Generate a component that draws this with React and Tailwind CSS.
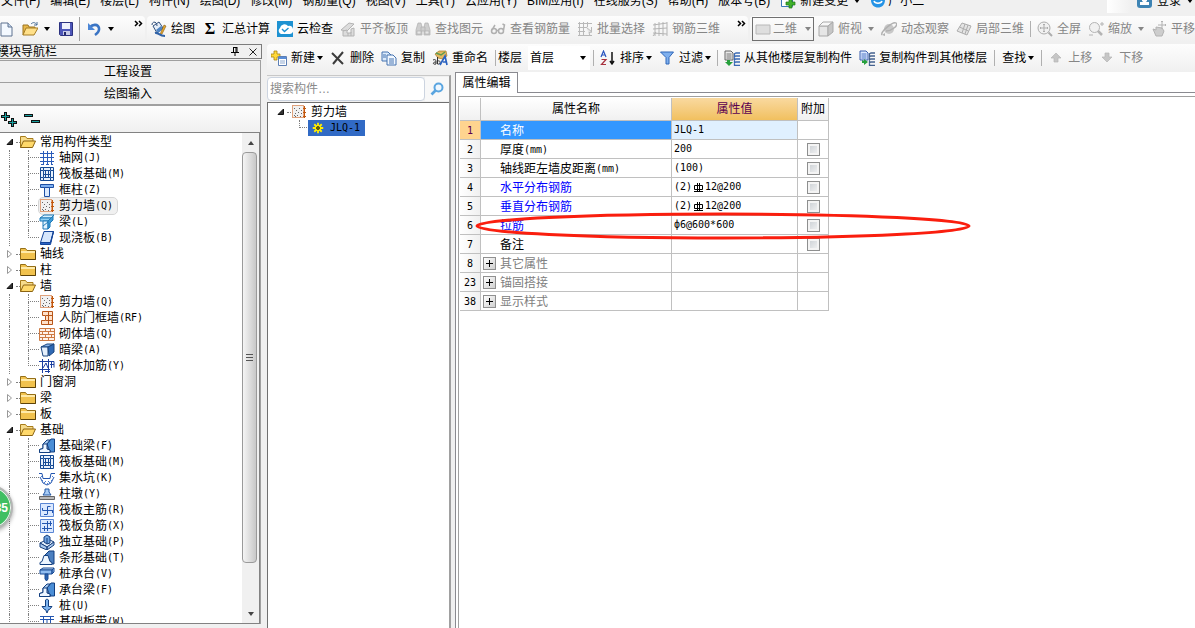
import React from 'react';
import clsx from 'clsx';

const MENUS = [
  '文件(F)', '编辑(E)', '楼层(L)', '构件(N)', '绘图(D)', '修改(M)', '钢筋量(Q)', '视图(V)',
  '工具(T)', '云应用(Y)', 'BIM应用(I)', '在线服务(S)', '帮助(H)', '版本号(B)',
];

const TREE = [
  {
    label: '常用构件类型',
    children: [
      ['axisGrid', '轴网', '(J)'],
      ['raft', '筏板基础', '(M)'],
      ['column', '框柱', '(Z)'],
      ['wall', '剪力墙', '(Q)', true],
      ['beam', '梁', '(L)'],
      ['slab', '现浇板', '(B)'],
    ],
  },
  { label: '轴线' },
  { label: '柱' },
  {
    label: '墙',
    children: [
      ['wall', '剪力墙', '(Q)'],
      ['airDefence', '人防门框墙', '(RF)'],
      ['brick', '砌体墙', '(Q)'],
      ['hiddenBeam', '暗梁', '(A)'],
      ['brickRebar', '砌体加筋', '(Y)'],
    ],
  },
  { label: '门窗洞' },
  { label: '梁' },
  { label: '板' },
  {
    label: '基础',
    children: [
      ['foundationBeam', '基础梁', '(F)'],
      ['raft', '筏板基础', '(M)'],
      ['sump', '集水坑', '(K)'],
      ['pier', '柱墩', '(Y)'],
      ['raftMain', '筏板主筋', '(R)'],
      ['raftNegative', '筏板负筋', '(X)'],
      ['isolated', '独立基础', '(P)'],
      ['strip', '条形基础', '(T)'],
      ['pileCap', '桩承台', '(V)'],
      ['foundationBeam', '承台梁', '(F)'],
      ['pile', '桩', '(U)'],
      ['band', '基础板带', '(W)'],
    ],
  },
];

const ROWS = [
  { no: 1, name: '名称', value: 'JLQ-1', selected: true },
  { no: 2, name: '厚度', unit: '(mm)', value: '200', check: true },
  { no: 3, name: '轴线距左墙皮距离', unit: '(mm)', value: '(100)', check: true },
  { no: 4, name: '水平分布钢筋', value: '(2)', rebar: '12@200', check: true, link: true },
  { no: 5, name: '垂直分布钢筋', value: '(2)', rebar: '12@200', check: true, link: true },
  { no: 6, name: '拉筋', value: 'ф6@600*600', check: true, link: true },
  { no: 7, name: '备注', value: '', check: true },
  { no: 8, name: '其它属性', group: true },
  { no: 23, name: '锚固搭接', group: true },
  { no: 38, name: '显示样式', group: true },
];

const ICONS = {
  // file toolbar
  file: (
    <>
      <path d="M3 2h7l4 4v9H3z" fill="#f4f9ff" stroke="#5f7390" />
      <path d="M10 2v4h4" fill="#c7d8ee" stroke="#5f7390" />
    </>
  ),
  open: (
    <>
      <path d="M1 14V4h5l1 2h6v3" fill="#e8b84a" stroke="#9c7420" />
      <path d="M1 14l3-7h12l-4 7z" fill="#ffe08a" stroke="#a57c24" />
      <path d="M9 3c2-2 4-2 6 1m0-3v3h-3" fill="none" stroke="#4a6e96" />
    </>
  ),
  save: (
    <>
      <path d="M1.500 1.500h13v13h-12l-1-1z" fill="#4d56b8" stroke="#2c3280" />
      <path d="M4 2h8v6H4z" fill="#eef0fb" />
      <path d="M5 10h7v4H5z" fill="#c8cce8" />
      <path d="M6 11h2v3H6z" fill="#23286a" />
    </>
  ),
  undo: (
    <>
      <path d="M4 6c3-3 8-3 9 1 .5 3-1 5-4 7" fill="none" stroke="#3a74c4" strokeWidth="2.600" />
      <path d="M2 2v7h7z" fill="#4b86d6" />
    </>
  ),
  draw: (
    <>
      <path d="M2 5l6-4 4 6-6 5z" fill="#e6eef8" stroke="#2f4f7c" />
      <path d="M1 4c0-4 5-4 5 1" fill="none" stroke="#2f4f7c" />
      <path d="M5 9l5-4 2 3-5 4z" fill="#4d84c4" />
      <path d="M15 5l-4 8-2 1 1-3 3-7z" fill="#e9a92c" stroke="#7c5512" strokeWidth=".6" />
      <path d="M4 12c3-1 4 3 10 3" fill="none" stroke="#2f62a8" strokeWidth="2" />
    </>
  ),
  cloud: (
    <>
      <path d="M0 0h16v16H0z" fill="#1e92d2" />
      <path d="M4 13a3.500 3.500 0 0 1-1-6 4.500 4.500 0 0 1 8-2 4 4 0 0 1 2 8z" fill="#fff" />
      <path d="M5 8l2.500 2.500L11.500 7" fill="none" stroke="#1e92d2" strokeWidth="1.400" />
    </>
  ),
  level: (
    <g fill="#dcdcdc" stroke="#b4b4b4">
      <path d="M1 9l8-7 5 1-7 7z" />
      <path d="M3 10v5h11V7l-3 1v4H7V9z" />
      <path d="M8 15v-3m3 3v-4" />
    </g>
  ),
  find: (
    <g fill="#cecece" stroke="#b0b0b0" strokeWidth=".7">
      <path d="M3 2h3l1 4v8H1V9zM10 2h3l2 7v5H9V6z" />
      <path d="M6 6h4v4H6z" />
      <path d="M2 10h4v3H2zM10 10h4v3h-4z" fill="#e6e6e6" />
    </g>
  ),
  glasses: (
    <g fill="none" stroke="#b0b0b0" strokeWidth="1.500">
      <circle cx="4" cy="10" r="2.500" />
      <circle cx="11" cy="10" r="2.500" />
      <path d="M6.500 9.500h2M2 9l3-5M13.500 9l1-5-2-1" />
    </g>
  ),
  batch: (
    <g fill="none" stroke="#b9b9b9">
      <path d="M1 2.500h14M1 6.500h8M1 10.500h7M1 14.500h14M2.500 1v14M6.500 1v14M10.500 1v5M14.500 6v4" />
      <path d="M9 6l6 5-3 .5 1 3.500" fill="#e5e5e5" />
    </g>
  ),
  rebar3d: (
    <g fill="none" stroke="#b4b4b4">
      <path d="M1 4l14-2M1 8l14-1M1 12l14 1M3 2v13M7 1v14M11 1v14M15 1v14M1 15l3-4" />
    </g>
  ),
  card: <path d="M1 4h14v9H1z" fill="#dedede" stroke="#b8b8b8" />,
  cube: (
    <g stroke="#a9a9a9">
      <path d="M1 5h9v10H1z" fill="#e6e6e6" />
      <path d="M1 5l4-4h10l-5 4z" fill="#f7f7f7" />
      <path d="M10 5l5-4v10l-5 4z" fill="#c6c6c6" />
    </g>
  ),
  orbit: (
    <>
      <circle cx="8" cy="8" r="5" fill="#c8c8c8" />
      <path d="M1 14C-1 11 12 0 15 2s-4 8-10 8" fill="none" stroke="#b0b0b0" strokeWidth="1.500" />
      <path d="M4 12l-3 2 3 1z" fill="#b2b2b2" />
    </>
  ),
  part3d: (
    <g fill="#e4e4e4" stroke="#adadad">
      <path d="M1 10l5-8 9 3-4 9z" />
      <path d="M3.500 6l9 4M9 3l-3 9M12 4l-3 9" fill="none" />
    </g>
  ),
  fullscreen: (
    <g fill="none" stroke="#adadad">
      <circle cx="7" cy="7" r="6" fill="#f1f1f1" />
      <path d="M7 3v8M3 7h8M6 4l1-1 1 1M6 10l1 1 1-1M4 6L3 7l1 1M10 6l1 1-1 1" />
      <path d="M11.500 11.500L15 15" strokeWidth="2" />
    </g>
  ),
  zoom: (
    <g fill="none" stroke="#b4b4b4">
      <circle cx="6.500" cy="6.500" r="5" fill="#f1f1f1" />
      <path d="M10 10l4 4" strokeWidth="2.500" />
      <path d="M12 3h4M14 1v4M1 14h4" />
    </g>
  ),
  pan: (
    <g fill="#cdcdcd" stroke="#b2b2b2">
      <path d="M2 8l3 1V6l6 1 2 3-2 5H5z" />
      <path d="M11 0v8M7 4h8M10 1l1-1 1 1M14 3l1 1-1 1" fill="none" />
    </g>
  ),
  // component toolbar
  create: (
    <>
      <path d="M3 1h3v3h3v3H6v3H3V7H0V4h3z" fill="#ffd93b" stroke="#a98310" strokeWidth=".8" />
      <path d="M7.500 6.500h8v9h-8z" fill="#fff" stroke="#5d7fb4" />
      <path d="M8 7h7v2H8z" fill="#5a8ed8" />
      <path d="M9 11h5M9 13h5" stroke="#8ea9cf" />
    </>
  ),
  remove: <path d="M2 3l11 11M13 2L3 14" fill="none" stroke="#3c3c3c" strokeWidth="2" />,
  copy: (
    <g stroke="#4472b0">
      <path d="M1 2h6l3 3v6H1z" fill="#dcebfb" />
      <path d="M6 5h6l3 3v7H6z" fill="#f2f8ff" />
      <path d="M8 9h5M8 11h5M8 13h5M2 5h3M2 7h3" />
    </g>
  ),
  rename: (
    <>
      <path d="M3 4l4-3h7l1 5-4 3-5-1z" fill="#e5b862" stroke="#a37a2a" strokeWidth=".7" />
      <path d="M4 3l5 2 4-3" fill="none" stroke="#5e9b4e" strokeWidth="1.500" />
      <path d="M1 10c2-1 3 0 3 1v3c-3 1-4-2 0-2M5.500 7v7c3 1 4-4 0-3" fill="none" stroke="#333" />
      <path d="M8 15l5-9 2 9m-4-3h4" fill="none" stroke="#2a62c0" strokeWidth="1.700" />
    </>
  ),
  sort: (
    <>
      <path d="M1 7l2.500-6L6 7M2 5h3" fill="none" stroke="#2a56c0" strokeWidth="1.200" />
      <path d="M1.500 9.500H6l-4.500 5H6" fill="none" stroke="#a8323e" strokeWidth="1.200" />
      <path d="M12 2v12m-2-3l2 3 2-3" fill="none" stroke="#111" strokeWidth="1.500" />
    </>
  ),
  filter: <path d="M1.500 2h13L10 7.500V14H7V7.500z" fill="#7fb0ee" stroke="#2f66b8" />,
  copyFrom: (
    <>
      <path d="M1 1h6l2 2v7H1z" fill="#e9e9e9" stroke="#666" />
      <path d="M2.500 4h5M2.500 6h5M2.500 8h5" stroke="#777" />
      <path d="M3 10h3v2h3l-4 4-4-4h2z" fill="#27a03c" />
      <path d="M10 4l2-1h4M10 7l2-1h4M10 10l2-1h4M10 13l2-1h4M10.500 4v12M11 15.500h5" fill="none" stroke="#3a69b4" strokeWidth="1.300" />
    </>
  ),
  copyTo: (
    <>
      <path d="M1 1h6l2 2v7H1z" fill="#dbe8ff" stroke="#3b5fae" />
      <path d="M2.500 4h5M2.500 6h5M2.500 8h5" stroke="#4d74c4" />
      <path d="M3 10v3h2v2l4-3-4-3v2z" fill="#27a03c" />
      <path d="M10 4l2-1h4M10 7l2-1h4M10 10l2-1h4M10 13l2-1h4M10.500 4v12M11 15.500h5" fill="none" stroke="#44618e" strokeWidth="1.300" />
    </>
  ),
  up: <path d="M8 3l5 5h-3v4H6V8H3z" fill="#c6c6c6" stroke="#b4b4b4" strokeWidth=".7" />,
  down: <path d="M8 12L3 7h3V3h4v4h3z" fill="#c6c6c6" stroke="#b4b4b4" strokeWidth=".7" />,
  // menu bar
  change: (
    <>
      <path d="M1.500 0v13.500h11V0" fill="#fff" stroke="#3a78b8" />
      <path d="M9 6h3v3h3v3h-3v3H9v-3H6V9h3z" fill="#3fb02a" stroke="#1f7a14" strokeWidth=".7" />
    </>
  ),
  robot: (
    <>
      <path d="M1 4h14v3c0 10-14 10-14 0z" fill="#2593e6" />
      <path d="M4 8c1 3 7 3 8 0" fill="none" stroke="#fff" strokeWidth="1.500" />
      <path d="M4 5h2M10 5h2" stroke="#fff" strokeWidth="2" />
    </>
  ),
  login: (
    <>
      <rect width="15" height="15" rx="3" fill="#3e84b4" />
      <path d="M3 9h9v3H3z" fill="#fff" />
      <path d="M5 4h5v4l-2.500 2L5 8z" fill="#fff" />
    </>
  ),
  // tree
  folder: (
    <>
      <path d="M.5 13.500v-11h5l1.500 2h8.500v9z" fill="#f1c24e" stroke="#967018" />
      <path d="M1 6h14" stroke="#ffeaa8" strokeWidth="2" />
      <path d="M15.500 5v8.500H1" fill="none" stroke="#5d430a" />
    </>
  ),
  folderOpen: (
    <>
      <path d="M.5 13.500v-11h5l1.500 2h6v3" fill="#f7dc8c" stroke="#a87d1c" />
      <path d="M.5 13.500l3-6.500h12l-3 6.500z" fill="#ffd96b" stroke="#8b6312" />
    </>
  ),
  axisGrid: (
    <path d="M4.500 1v14M8.500 1v14M12.500 1v14M1 3.500h14M1 7.500h14M1 11.500h14M2 14.500h2M7 14.500h3M12 14.500h2" fill="none" stroke="#2a5cba" />
  ),
  raft: (
    <g fill="none" stroke="#164a94">
      <path d="M1.500 1.500h13v13h-13z" fill="#e8f1fc" />
      <path d="M4.500 4.500h7v7h-7zM4.500 1v3M11.500 1v3M4.500 12v3M11.500 12v3M1 4.500h3M1 11.500h3M12 4.500h3M12 11.500h3M6.500 5v6M9.500 5v6M5 8.500h6" />
    </g>
  ),
  column: (
    <g stroke="#1d4fa4">
      <path d="M1.500 2.500h13v3h-13z" fill="#7fb0f0" />
      <path d="M5.500 5.500h5v9h-5z" fill="#dceafd" />
    </g>
  ),
  wall: (
    <g shapeRendering="crispEdges">
      <path d="M1.500 1.500h11v12h-11z" fill="#f1f1f1" stroke="#e0a27c" />
      <path d="M3 11.500h1M4 9.500h1M6 11.500h1M7 8.500h1M9 12.500h1M5 6.500h1M3 4.500h1M8 4.500h1M10 9.500h1M4 12.500h1M10 6.500h1" stroke="#666" />
      <path d="M13.500 2v12M12 4.500h3M12 8.500h3M12 12.500h3" stroke="#c2570c" />
    </g>
  ),
  beam: (
    <g stroke="#1f7ab8">
      <path d="M1 4l4-3h10l-3 3z" fill="#d6f0ff" />
      <path d="M1 4h11v3H1z" fill="#8fd0f4" />
      <path d="M4 7h5v8H4z" fill="#e2f4ff" />
      <path d="M9 7l5-5v4l-3 3v4l-2 2zM4 12l5-4" fill="#3c9ad6" />
    </g>
  ),
  slab: (
    <g stroke="#15459a">
      <path d="M5 1.500h9.500l-3 11H1.500z" fill="#d6e6fc" />
      <path d="M1.500 12.500v2h10l3-13-3 11z" fill="#2c64c4" />
    </g>
  ),
  airDefence: (
    <>
      <path d="M3.500 1.500h10v13h-11v-4h4v-5h-3z" fill="#ffe2cb" stroke="#b8561a" />
      <path d="M9.500 2v12M7 5.500h6M7 10.500h6" stroke="#b8561a" />
    </>
  ),
  brick: (
    <g stroke="#cd7a43">
      <path d="M.5 2.500h15v12H.5z" fill="#fff3ea" />
      <path d="M1 5.500h14M1 8.500h14M1 11.500h14M6.500 3v3M11.500 3v3M3.500 6v3M9.500 6v3M6.500 9v3M12.500 9v3M3.500 12v2M9.500 12v2" />
    </g>
  ),
  hiddenBeam: (
    <g stroke="#1b4680">
      <path d="M2 5l6-3h7l-6 3z" fill="#8bb6ea" />
      <path d="M2 5h7v9H4z" fill="#e5f0fd" />
      <path d="M9 5l6-3v8l-5 4z" fill="#2f69b4" />
    </g>
  ),
  brickRebar: (
    <g fill="none" stroke="#1c3fa0">
      <path d="M0 3.500h15v6M0 11.500h11M3.500 1v14M9.500 1v14" />
      <path d="M4 10l3-5 2 5M12.500 4v6M11 6.500h4M6 13.500h5" />
    </g>
  ),
  foundationBeam: (
    <g stroke="#123f80">
      <path d="M8 6l4-5h3.500v13H11z" fill="#4b8ed6" />
      <path d="M.5 14.500v-3l3.500-1V6l4-4h3L8 6v5l3 1v2.500z" fill="#a9cbf0" />
      <path d="M.5 14.500v-3l3.500-1V6h4v5l3 1v2.500z" fill="#eef6ff" />
    </g>
  ),
  sump: (
    <>
      <path d="M0 3.500h3l1 5h7l1-5h4M1 7l3 6 4 2 4-2 3-6" fill="none" stroke="#2356b0" />
      <path d="M3 10.500h1M6 11.500h1M9 11.500h1M12 10.500h1M5 12.500h1M8 13.500h1M10 12.500h1M2 6.500h1M13 6.500h1" stroke="#4a7ed0" />
    </>
  ),
  pier: (
    <>
      <path d="M4 9l2-3V3h4v3l2 3z" fill="#a9cdf6" stroke="#2156a4" />
      <path d="M.5 10.500h15v3H.5z" fill="#b9b9b9" stroke="#666" />
    </>
  ),
  raftMain: (
    <g fill="none" stroke="#2356b0">
      <path d="M1.500 1.500h13v13h-13z" fill="#dbe9ff" stroke="#5a86d4" />
      <path d="M3.500 6v2.500h10M8.500 12.500v-8h3M13.500 8v3M5 12.500h3" />
    </g>
  ),
  raftNegative: (
    <g fill="none" stroke="#2356b0">
      <path d="M1.500 1.500h13v13h-13z" fill="#dbe9ff" stroke="#5a86d4" />
      <path d="M3 5.500h10M3 10.500h10M5.500 8v5M11.500 3v5M8.500 3v10" />
    </g>
  ),
  isolated: (
    <g stroke="#173f7c">
      <path d="M1 9l8-4 6 3-7 5z" fill="#e4effc" />
      <path d="M1 9l7 4v3l-7-3zM8 13l7-5v3l-7 5z" fill="#a8c8ee" />
      <path d="M5 3l3-2 3 2v6l-3 1-3-2z" fill="#6fa4e2" />
      <path d="M8 4v6" />
    </g>
  ),
  strip: (
    <g stroke="#123f80">
      <path d="M6 5l4-4h5v13h-3z" fill="#4b7fc0" />
      <path d="M1 14.500v-2l2-1 2-6h4l2 6 2 1v2z" fill="#eef6ff" />
    </g>
  ),
  pileCap: (
    <g stroke="#184a94">
      <path d="M1 4l3-2h11l-2 2z" fill="#cfe3fb" />
      <path d="M1 4h12v4H1zM13 4l2-2v4l-2 2z" fill="#8fbcf0" />
      <path d="M6 8h3v5l-1.500 2L6 13z" fill="#2b63b0" />
    </g>
  ),
  pile: (
    <g stroke="#123f80">
      <path d="M6.500 2c1-1 2-1 3 0v6.500h3.500l-2.500 3h-1l-1.500 3.500-1.500-3.500h-1L3 8.500h3.500z" fill="#7fb4ee" />
    </g>
  ),
  band: <path d="M1 2.500h14M1 5.500h14M4.500 3v12M11.500 3v12M8 6v9" fill="none" stroke="#2356b0" />,
  sun: (
    <>
      <path d="M8 1v14M1 8h14M3 3l10 10M13 3L3 13" stroke="#ffee00" strokeWidth="2.400" />
      <circle cx="8" cy="8" r="4" fill="#ffee00" />
      <circle cx="8" cy="8" r="2" fill="#7c7400" stroke="#222" />
    </>
  ),
};

const Icon = ({ name, className }) => (
  <svg viewBox="0 0 16 16" className={clsx('w-4 h-4 shrink-0', className)} aria-hidden="true">
    {ICONS[name]}
  </svg>
);

const Caret = ({ className }) => (
  <svg viewBox="0 0 6 4" className={clsx('w-1.5 h-1 shrink-0', className)} aria-hidden="true">
    <path d="M0 0h6L3 4z" fill="currentColor" />
  </svg>
);

const More = () => (
  <button aria-label="更多" className="self-start mt-1">
    <svg viewBox="0 0 9 7" className="w-[9px] h-[7px]" fill="none" stroke="#000" strokeWidth="1.500">
      <path d="M1 1l2.500 2.500L1 6M5 1l2.500 2.500L5 6" />
    </svg>
  </button>
);

const Sep = ({ className }) => <span className={clsx('w-px h-4 bg-[#b0b0b0] shrink-0', className)} />;

const ToolButton = ({ icon, label, caret, disabled }) => (
  <button
    disabled={disabled}
    className={clsx('flex items-center shrink-0 whitespace-nowrap', disabled ? 'text-[#868686]' : 'text-black')}
  >
    {icon === 'sigma' ? (
      <span className="w-4 mr-1 font-['Liberation_Serif'] text-[16px] leading-4 font-bold text-center">Σ</span>
    ) : (
      icon && <Icon name={icon} className="mr-1" />
    )}
    {label}
    {caret === 'wide' && <Caret className="ml-1.5" />}
    {caret === 'tight' && <Caret className="ml-0.5" />}
  </button>
);

// half-width latin text beside the 12px chinese glyphs
const Mono = ({ children }) => (
  <span className="font-['DejaVu_Sans_Mono','Noto_Sans_CJK_SC',monospace] text-[10px]">{children}</span>
);

const Expander = ({ open }) => (
  <svg viewBox="0 0 8 8" className="w-2 h-2 shrink-0" aria-hidden="true">
    {open ? (
      <path d="M6.500 1v5.500H1z" fill="#333" stroke="#111" />
    ) : (
      <path d="M1.500 .5L5.500 4l-4 3.500z" fill="#fff" stroke="#999" />
    )}
  </svg>
);

const MenuBar = () => (
  <nav className="flex items-start h-[23px] -mt-[7px] leading-4 whitespace-nowrap overflow-hidden">
    <div className="flex gap-2.5 pl-px">
      {MENUS.map((m) => (
        <button key={m}>{m}</button>
      ))}
    </div>
    <button className="flex items-center ml-2.5">
      <Icon name="change" className="mr-1" />
      新建变更
      <Caret className="ml-1.5" />
    </button>
    <button className="flex items-center ml-2.5">
      <Icon name="robot" className="mr-0.5" />
      广小二
    </button>
    <div className="ml-auto w-6 h-5 bg-gradient-to-r from-white to-[#f0f0f0]" />
    <button className="flex items-center ml-1.5">
      <Icon name="login" className="mr-1" />
      登录
      <Caret className="ml-1.5 mr-0.5" />
    </button>
  </nav>
);

const bar = 'flex items-center bg-gradient-to-b from-[#fdfdfd] to-[#f0f0f0]';

const MainToolbar = () => (
  <div className="flex gap-0.5 h-[27px] overflow-hidden">
    <div className={clsx(bar, 'w-[145px] shrink-0 rounded-r')}>
      <button aria-label="新建" className="-ml-0.5"><Icon name="file" /></button>
      <button aria-label="打开" className="flex items-center ml-2">
        <Icon name="open" />
        <Caret className="ml-1.5" />
      </button>
      <button aria-label="保存" className="ml-2"><Icon name="save" /></button>
      <span className="w-px h-6 bg-[#a0a0a0] ml-[5px]" />
      <button aria-label="撤销" className="flex items-center ml-1.5">
        <Icon name="undo" />
        <Caret className="ml-1.5" />
      </button>
      <span className="flex self-stretch ml-5"><More /></span>
    </div>
    <div className={clsx(bar, 'w-[601px] shrink-0 gap-[7px] pl-1 rounded')}>
      <ToolButton icon="draw" label="绘图" />
      <ToolButton icon="sigma" label="汇总计算" />
      <ToolButton icon="cloud" label="云检查" />
      <ToolButton icon="level" label="平齐板顶" disabled />
      <ToolButton icon="find" label="查找图元" disabled />
      <ToolButton icon="glasses" label="查看钢筋量" disabled />
      <ToolButton icon="batch" label="批量选择" disabled />
      <ToolButton icon="rebar3d" label="钢筋三维" disabled />
      <span className="flex self-stretch ml-2.5"><More /></span>
    </div>
    <div className={clsx(bar, 'grow gap-[7px] pl-0.5 rounded-l')}>
      <label className="flex items-center h-6 w-[62px] shrink-0 mr-[-3px] px-0.5 border border-[#707070] text-[#868686]">
        <Icon name="card" />
        <select aria-label="视图" className="appearance-none grow min-w-0 pl-0.5 text-[12px]">
          <option>二维</option>
        </select>
        <Caret />
      </label>
      <ToolButton icon="cube" label="俯视" caret="wide" disabled />
      <ToolButton icon="orbit" label="动态观察" disabled />
      <ToolButton icon="part3d" label="局部三维" disabled />
      <Sep className="-mx-px" />
      <ToolButton icon="fullscreen" label="全屏" disabled />
      <ToolButton icon="zoom" label="缩放" caret="wide" disabled />
      <ToolButton icon="pan" label="平移" disabled />
    </div>
  </div>
);

const ComponentToolbar = () => (
  <div className={clsx(bar, 'h-[28px] gap-[7px] pl-1 rounded-l overflow-hidden')}>
    <ToolButton icon="create" label="新建" caret="tight" />
    <ToolButton icon="remove" label="删除" />
    <ToolButton icon="copy" label="复制" />
    <ToolButton icon="rename" label="重命名" />
    <div className="flex items-center gap-0.5">
      <Sep />
      <label htmlFor="floor" className="shrink-0 whitespace-nowrap">楼层</label>
      <div className="flex items-center w-[62px] h-6 ml-1 bg-white">
        <select id="floor" className="appearance-none grow min-w-0 pl-0.5 text-[12px]">
          <option>首层</option>
        </select>
        <Caret className="mr-1" />
      </div>
    </div>
    <Sep className="-ml-1 -mr-px" />
    <ToolButton icon="sort" label="排序" caret="tight" />
    <ToolButton icon="filter" label="过滤" caret="tight" />
    <Sep className="-mx-px" />
    <ToolButton icon="copyFrom" label="从其他楼层复制构件" />
    <ToolButton icon="copyTo" label="复制构件到其他楼层" />
    <Sep />
    <ToolButton label="查找" caret="tight" />
    <Sep className="-mr-px" />
    <ToolButton icon="up" label="上移" disabled />
    <ToolButton icon="down" label="下移" disabled />
  </div>
);

const TreeChild = ({ item: [icon, label, key, active], last }) => (
  <li className="flex h-4 items-center whitespace-nowrap">
    <span className="w-[19px] ml-[9px] h-4 border-l border-dotted border-[#808080]" />
    <span className="w-[11px] h-4">
      <span className="block h-2 border-l border-b border-dotted border-[#808080]" />
      {!last && <span className="block h-2 border-l border-dotted border-[#808080]" />}
    </span>
    <button
      className={clsx(
        'flex items-center h-4 pr-1',
        active && 'rounded-sm bg-[#f0f0f0] outline outline-1 outline-[#d5d5d5]'
      )}
    >
      <Icon name={icon} className="mr-1" />
      {label}
      <Mono>{key}</Mono>
    </button>
  </li>
);

const ModuleTree = () => (
  <ul className="grow min-w-0 pt-px overflow-hidden">
    {TREE.map(({ label, children }) => (
      <li key={label}>
        <button className="flex h-4 items-center pl-1.5 whitespace-nowrap">
          <Expander open={!!children} />
          <span className="w-1 ml-0.5 h-px border-b border-dotted border-[#808080]" />
          <Icon name={children ? 'folderOpen' : 'folder'} className="mr-1" />
          {label}
        </button>
        {children && (
          <ul>
            {children.map((c, i) => (
              <TreeChild key={c[1]} item={c} last={i === children.length - 1} />
            ))}
          </ul>
        )}
      </li>
    ))}
  </ul>
);

const ScrollBar = () => (
  <div className="flex flex-col w-[17px] shrink-0 bg-[#f0f0f0]">
    <button aria-label="向上" className="flex h-[19px] items-center justify-center">
      <Caret className="rotate-180 text-[#444]" />
    </button>
    <div className="flex flex-col gap-0.5 justify-center items-center h-[411px] mr-0.5 border border-[#9a9a9a] rounded-sm bg-gradient-to-r from-[#f5f5f5] to-[#c8c8c8]">
      <span className="w-[7px] h-px bg-[#555]" />
      <span className="w-[7px] h-px bg-[#555]" />
      <span className="w-[7px] h-px bg-[#555]" />
    </div>
    <button aria-label="向下" className="flex h-[19px] mt-auto items-center justify-center">
      <Caret className="text-[#444]" />
    </button>
  </div>
);

const Navigator = () => (
  <aside className="flex flex-col w-[262px] shrink-0 pb-1">
    <header className="flex items-center h-[15px] border border-l-0 border-[#7c7c7c] overflow-hidden whitespace-nowrap">
      <h2 className="-ml-[3px] leading-3">模块导航栏</h2>
      <button aria-label="固定" className="ml-auto mr-2.5">
        <svg viewBox="0 0 8 9" className="w-2 h-[9px]" fill="none" stroke="#000">
          <path d="M2 .5h4M2.500 0v5M5 0v5M6 0v5M0 5.500h8M4 6v3" />
        </svg>
      </button>
      <button aria-label="关闭" className="mr-1">
        <svg viewBox="0 0 8 8" className="w-2 h-2" fill="none" stroke="#222">
          <path d="M.5.5l7 7M7.500.5l-7 7" />
        </svg>
      </button>
    </header>
    <div className="flex flex-col grow min-h-0 mt-px mr-px border-t border-r border-[#a0a0a0]">
      <button className="h-[22px] pr-1 shrink-0 border-b border-[#a0a0a0]">工程设置</button>
      <button className="h-[23px] pr-1 shrink-0 border-b-2 border-[#a0a0a0]">绘图输入</button>
      <div className={clsx(bar, 'h-[26px] shrink-0 pl-px gap-[7px]')}>
        <button aria-label="全部展开">
          <svg viewBox="0 0 16 16" className="w-4 h-4">
            <path d="M3 1h3v3h3v3H6v3H3V7H0V4h3zM10 7h3v3h3v3h-3v3h-3v-3H7v-3h3z" fill="#111" />
            <path d="M4.500 2v7M1 5.500h7M11.500 8v7M8 11.500h7" stroke="#19a0a0" />
          </svg>
        </button>
        <button aria-label="全部折叠">
          <svg viewBox="0 0 16 16" className="w-4 h-4">
            <path d="M0 3h9v3H0zM7 9h9v3H7z" fill="#111" />
            <path d="M1 4.500h7M8 10.500h7" stroke="#19a0a0" />
          </svg>
        </button>
      </div>
      <div className="flex grow min-h-0 border-y border-r border-[#828282] bg-white">
        <ModuleTree />
        <ScrollBar />
      </div>
    </div>
  </aside>
);

const ComponentList = () => (
  <section className="flex flex-col w-[184px] shrink-0 mt-[3px] border-r-2 border-t border-[#a0a0a0] border-t-[#c8c8c8]">
    <div className="flex items-center h-[26px] shrink-0">
      <input
        type="text"
        aria-label="搜索构件"
        placeholder="搜索构件…"
        className="w-[158px] h-6 px-0.5 bg-white border border-[#ccd4e0] rounded-sm placeholder:text-[#8a8a8a] text-[12px]"
      />
      <button aria-label="搜索" className="flex grow h-6 items-center justify-center bg-[#f8f8f8]">
        <svg viewBox="0 0 14 14" className="w-3.5 h-3.5" fill="none" stroke="#5aa5e0" strokeWidth="2">
          <circle cx="8.500" cy="5.500" r="4" fill="#eef7ff" />
          <path d="M5.500 8.500L1.500 12.500" strokeWidth="2.600" />
        </svg>
      </button>
    </div>
    <ul className="grow pt-px border-t border-l border-[#707070] bg-white">
      <li>
        <button className="flex items-center h-4 pl-[9px]">
          <Expander open />
          <span className="w-1 ml-0.5 h-px border-b border-dotted border-[#808080]" />
          <Icon name="wall" className="mr-1" />
          剪力墙
        </button>
        <button className="flex items-center h-4 pl-[31px]">
          <span className="w-2 h-2 mb-2 mr-px border-l border-b border-dotted border-[#808080]" />
          <span className="flex items-center h-4 w-[57px] px-0.5 gap-1 bg-[#316ac5]">
            <Icon name="sun" className="p-0.5" />
            <Mono>JLQ-1</Mono>
          </span>
        </button>
      </li>
    </ul>
  </section>
);

const PropertyRow = ({ row }) => (
  <tr className="h-[19px]">
    <th
      scope="row"
      className={clsx(
        'border-r border-b border-[#c0c0c0] font-normal',
        row.selected ? 'bg-[#ffd48f] text-[#5a0050]' : 'bg-gradient-to-r from-white to-[#f0f0f0]'
      )}
    >
      <Mono>{row.no}</Mono>
    </th>
    <td className={clsx('border-r border-b border-[#c0c0c0]', row.selected && 'bg-[#3397ff]')}>
      <div
        className={clsx(
          'flex items-center h-[18px] pt-px',
          row.selected && 'text-white',
          row.link && 'text-[#0000ff]',
          row.group && 'text-[#808080]'
        )}
      >
        <span className="flex w-[19px] pl-0.5">
          {row.group && (
            <button
              aria-label={`展开${row.name}`}
              className="w-[13px] h-[13px] border border-[#909090] bg-gradient-to-br from-white to-[#d0d0d0]"
            >
              <svg viewBox="0 0 11 11" className="w-[11px] h-[11px]" stroke="#000">
                <path d="M2 5.500h7M5.500 2v7" />
              </svg>
            </button>
          )}
        </span>
        {row.name}
        {row.unit && <Mono>{row.unit}</Mono>}
      </div>
    </td>
    <td className={clsx('pl-0.5 border-r border-b border-[#c0c0c0]', row.selected && 'bg-[#e0f0ff]')}>
      <div className="flex items-center">
        <Mono>{row.value}</Mono>
        {row.rebar && (
          <>
            <svg viewBox="0 0 11 11" className="w-[11px] h-[11px] mx-px" fill="none" stroke="#000" role="img" aria-label="三级钢">
              <path d="M1.500 3.500h8v4h-8zM4.500 1v9M6.500 1v9M1 9.500h9" />
            </svg>
            <Mono>{row.rebar}</Mono>
          </>
        )}
      </div>
    </td>
    <td className="border-r border-b border-[#c0c0c0]">
      {row.check && (
        <input
          type="checkbox"
          aria-label={`附加${row.name}`}
          className="block mx-auto appearance-none w-[13px] h-[13px] border border-[#8e8f8f] bg-gradient-to-br from-[#c8cdd2] to-[#f6f6f6] shadow-[inset_0_0_0_2px_#f4f4f4]"
        />
      )}
    </td>
  </tr>
);

const PropertyEditor = () => (
  <section className="flex flex-col grow min-w-0 ml-1 bg-white">
    <div role="tablist" className="flex h-[21px] shrink-0">
      <button role="tab" aria-selected="true" className="w-[63px] border border-b-0 border-[#8a8a90]">
        属性编辑
      </button>
      <span className="grow border-b border-[#8a8a90]" />
    </div>
    <div className="flex grow min-h-0 border-l border-[#8a8a90]">
      <div className="relative grow mt-[3px] ml-0.5 pt-px pl-px border-t border-l border-[#a0a0a0]">
        <table className="table-fixed w-[369px] border-separate border-spacing-0">
          <colgroup>
            <col className="w-[21px]" />
            <col className="w-[191px]" />
            <col className="w-[126px]" />
            <col className="w-[31px]" />
          </colgroup>
          <thead>
            <tr className="h-[23px] bg-gradient-to-b from-white to-[#f0f0f0]">
              <th className="border-r border-b border-[#c0c0c0]" />
              <th className="border-r border-b border-[#c0c0c0] font-normal">属性名称</th>
              <th className="border-r border-b border-[#c0c0c0] font-normal text-[#5a0050] bg-gradient-to-b from-[#f9d99f] to-[#f1c05e]">
                属性值
              </th>
              <th className="border-r border-b border-[#c0c0c0] font-normal whitespace-nowrap">附加</th>
            </tr>
          </thead>
          <tbody>
            {ROWS.map((row) => (
              <PropertyRow key={row.no} row={row} />
            ))}
          </tbody>
        </table>
        {/* hand-drawn highlight round row 6 */}
        <svg
          viewBox="0 0 496 28"
          className="absolute left-4 top-[115px] w-[496px] h-7 pointer-events-none"
          fill="none"
          stroke="#fa1e0e"
          strokeWidth="3"
          aria-hidden="true"
        >
          <ellipse cx="248" cy="14" rx="246" ry="12" />
        </svg>
      </div>
    </div>
  </section>
);

const App = () => (
  <div className="relative flex flex-col h-screen overflow-hidden bg-[#f0f0f0] text-black text-[12px] leading-4 font-['Liberation_Sans','Noto_Sans_CJK_SC',sans-serif]">
    <MenuBar />
    <MainToolbar />
    <div className="flex grow min-h-0 mt-0.5">
      <Navigator />
      <main className="flex flex-col grow min-w-0 ml-[5px]">
        <ComponentToolbar />
        <div className="flex grow min-h-0">
          <ComponentList />
          <PropertyEditor />
        </div>
      </main>
    </div>
    {/* floating progress ball */}
    <div className="absolute -left-8 top-[485px] flex items-center justify-end w-[45px] h-[45px] pr-[3px] rounded-full border-2 border-[#b5b5b5] bg-[#3fbf62] text-white text-[12px] font-bold shadow-[inset_0_0_0_1px_#f4f4f4,0_2px_4px_#00000055]">
      35
    </div>
  </div>
);

export default App;
